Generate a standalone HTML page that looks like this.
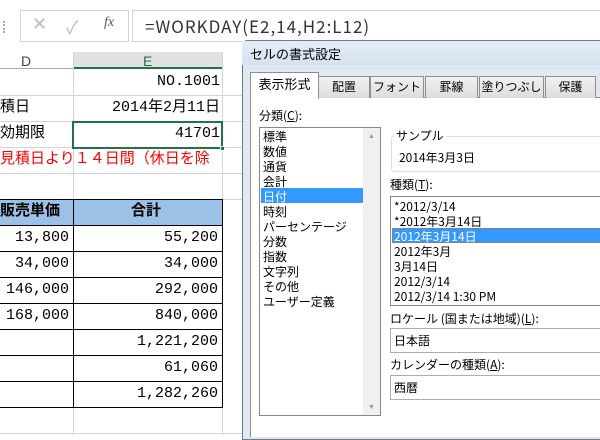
<!DOCTYPE html>
<html><head><meta charset="utf-8"><style>
*{margin:0;padding:0;box-sizing:border-box}
body{width:600px;height:435px;overflow:hidden;background:#fff;position:relative;font-family:"Liberation Sans","Noto Sans CJK JP",sans-serif}
.a{position:absolute;white-space:nowrap}
.s{font-family:"Liberation Mono","Noto Sans CJK JP",monospace;font-size:15px;color:#000;line-height:20px}
.h{position:absolute;height:1px;background:#d4d4d4}
.v{position:absolute;width:1px;background:#d4d4d4}
.d{font-family:"Noto Sans CJK JP",sans-serif;font-size:12px;color:#000;line-height:15px}
.tab{position:absolute;top:76px;height:22px;border:1px solid #8e8f8f;border-bottom:none;background:linear-gradient(#f2f2f2,#dcdcdc);font-size:12px;text-align:center;line-height:20px;font-family:"Noto Sans CJK JP",sans-serif}
</style></head><body>
<!-- formula bar -->
<div class="a" style="left:3px;top:21px;width:2px;height:12px;border-left:2px dotted #aaa"></div>
<div class="a" style="left:20px;top:10px;width:109px;height:32px;border:1px solid #d4d4d4"></div>
<div class="a" style="left:32px;top:14px;font-size:18px;color:#bbb">✕</div>
<div class="a" style="left:66px;top:14px;font-size:18px;color:#bbb">✓</div>
<div class="a" style="left:104px;top:15px;font-size:14px;color:#555;font-style:italic;font-family:'Liberation Serif',serif">fx</div>
<div class="a" style="left:132px;top:10px;width:480px;height:32px;border:1px solid #d4d4d4"></div>
<div class="a" style="left:145px;top:13px;font-size:17px;letter-spacing:1px;color:#333;font-family:'Noto Sans CJK JP',sans-serif">=WORKDAY(E2,14,H2:L12)</div>
<!-- column headers -->
<div class="a" style="left:73px;top:52px;width:149px;height:17px;background:#e1e1e1;border-bottom:2px solid #217346"></div>
<div class="v" style="left:73px;top:52px;height:383px;background:#d4d4d4"></div>
<div class="v" style="left:222px;top:52px;height:383px"></div>
<div class="h" style="left:0;top:68px;width:73px;background:#ababab"></div>
<div class="a" style="left:21px;top:53px;font-size:14px;color:#444">D</div>
<div class="a" style="left:143px;top:53px;font-size:14px;color:#217346">E</div>
<!-- row lines -->
<div class="h" style="left:0;top:95px;width:242px"></div>
<div class="h" style="left:0;top:121px;width:242px"></div>
<div class="h" style="left:0;top:147px;width:242px"></div>
<div class="h" style="left:0;top:173px;width:242px"></div>
<div class="h" style="left:0;top:199px;width:242px"></div>
<div class="h" style="left:0;top:433px;width:242px"></div>
<div class="a s" style="right:380px;top:72px">NO.1001</div>
<div class="a s" style="left:0;top:98px">積日</div>
<div class="a s" style="right:380px;top:98px">2014年2月11日</div>
<div class="a s" style="left:0;top:124px">効期限</div>
<div class="a" style="left:72px;top:121px;width:151px;height:28px;border:2px solid #217346"></div>
<div class="a" style="left:220px;top:146px;width:5px;height:5px;background:#217346;border:1px solid #fff"></div>
<div class="a s" style="right:380px;top:124px">41701</div>
<div class="a s" style="left:0;top:150px;color:#f00">見積日より１４日間（休日を除</div>
<!-- table -->
<div class="a" style="left:-1px;top:199px;width:224px;height:26px;background:#9bc2e6"></div>
<div class="a" style="left:0;top:199px;width:223px;height:209px;border:1px solid #000;border-left:none"></div>
<div class="a" style="left:73px;top:199px;width:1px;height:209px;background:#000"></div>
<div class="h" style="left:0;top:225px;width:223px;background:#000"></div>
<div class="h" style="left:0;top:251px;width:223px;background:#000"></div>
<div class="h" style="left:0;top:277px;width:223px;background:#000"></div>
<div class="h" style="left:0;top:303px;width:223px;background:#000"></div>
<div class="h" style="left:0;top:329px;width:223px;background:#000"></div>
<div class="h" style="left:0;top:355px;width:223px;background:#000"></div>
<div class="h" style="left:0;top:381px;width:223px;background:#000"></div>
<div class="a s" style="left:0;top:202px;font-weight:bold">販売単価</div>
<div class="a s" style="left:131px;top:202px;font-weight:bold">合計</div>
<div class="a s" style="right:531px;top:228px">13,800</div><div class="a s" style="right:382px;top:228px">55,200</div>
<div class="a s" style="right:531px;top:254px">34,000</div><div class="a s" style="right:382px;top:254px">34,000</div>
<div class="a s" style="right:531px;top:280px">146,000</div><div class="a s" style="right:382px;top:280px">292,000</div>
<div class="a s" style="right:531px;top:306px">168,000</div><div class="a s" style="right:382px;top:306px">840,000</div>
<div class="a s" style="right:382px;top:332px">1,221,200</div>
<div class="a s" style="right:382px;top:358px">61,060</div>
<div class="a s" style="right:382px;top:384px">1,282,260</div>
<!-- dialog -->
<div class="a" style="left:242px;top:40px;width:370px;height:400px;background:#dfe8f3;border:1px solid #6d7b8c;border-radius:5px 0 0 0"></div>
<div class="a" style="left:242px;top:41px;width:360px;height:24px;background:linear-gradient(#e4edf7,#d6e2f0)"></div>
<div class="a d" style="left:250px;top:46px;font-size:13px">セルの書式設定</div>
<div class="a" style="left:250px;top:97px;width:360px;height:340px;background:#fff;border:1px solid #8e8f8f;border-bottom:none"></div>
<div class="tab" style="left:318px;width:52px">配置</div>
<div class="tab" style="left:370px;width:54px">フォント</div>
<div class="tab" style="left:425px;width:53px">罫線</div>
<div class="tab" style="left:479px;width:65px">塗りつぶし</div>
<div class="tab" style="left:545px;width:51px">保護</div>
<div class="a" style="left:250px;top:72px;width:69px;height:27px;background:#fff;border:1px solid #8e8f8f;border-bottom:none;font-size:13px;line-height:22px;text-align:center;font-family:'Noto Sans CJK JP',sans-serif">表示形式</div>
<div class="a d" style="left:259px;top:108px">分類(<u>C</u>):</div>
<div class="a" style="left:259px;top:127px;width:122px;height:289px;border:1px solid #828790"></div>
<div class="a" style="left:363px;top:128px;width:17px;height:287px;background:#f0f0f0"></div>
<div class="a" style="left:368px;top:133px;font-size:7px;color:#999">▲</div>
<div class="a" style="left:368px;top:404px;font-size:7px;color:#999">▼</div>
<div class="a" style="left:261px;top:188px;width:102px;height:15px;background:#3399ff"></div>
<div class="a d" style="left:263px;top:129px;line-height:15px">標準<br>数値<br>通貨<br>会計<br><span style="color:#fff">日付</span><br>時刻<br>パーセンテージ<br>分数<br>指数<br>文字列<br>その他<br>ユーザー定義</div>
<div class="a" style="left:391px;top:136px;width:215px;height:36px;border:1px solid #d5dfe5;border-radius:3px"></div>
<div class="a d" style="left:394px;top:128px;background:#fff;padding:0 2px">サンプル</div>
<div class="a d" style="left:399px;top:150px">2014年3月3日</div>
<div class="a d" style="left:390px;top:177px">種類(<u>T</u>):</div>
<div class="a" style="left:390px;top:196px;width:215px;height:110px;border:1px solid #828790"></div>
<div class="a" style="left:392px;top:228px;width:215px;height:15px;background:#3399ff;border:1px dotted #c07020"></div>
<div class="a d" style="left:394px;top:199px">*2012/3/14<br>*2012年3月14日<br><span style="color:#fff">2012年3月14日</span><br>2012年3月<br>3月14日<br>2012/3/14<br>2012/3/14 1:30 PM</div>
<div class="a d" style="left:390px;top:311px">ロケール (国または地域)(<u>L</u>):</div>
<div class="a" style="left:390px;top:328px;width:215px;height:25px;border:1px solid #abadb3"></div>
<div class="a d" style="left:394px;top:333px">日本語</div>
<div class="a d" style="left:390px;top:357px">カレンダーの種類(<u>A</u>):</div>
<div class="a" style="left:390px;top:375px;width:215px;height:25px;border:1px solid #abadb3"></div>
<div class="a d" style="left:394px;top:380px">西暦</div>
</body></html>
